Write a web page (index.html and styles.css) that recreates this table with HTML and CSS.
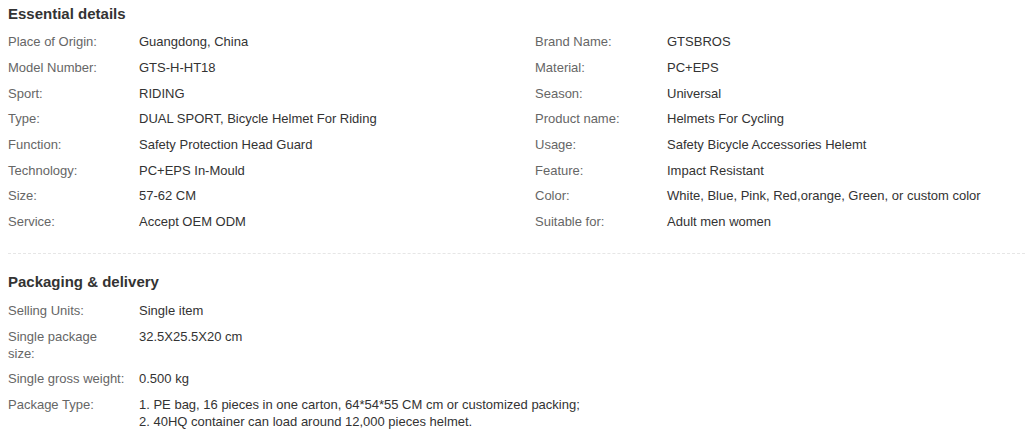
FILE: index.html
```html
<!DOCTYPE html>
<html>
<head>
<meta charset="utf-8">
<link rel="stylesheet" href="styles.css">
</head>
<body>
<div class="page">
  <section class="block essential">
    <h3 class="title">Essential details</h3>
    <div class="cols">
      <div class="col">
        <div class="row"><div class="label">Place of Origin:</div><div class="value">Guangdong, China</div></div>
        <div class="row"><div class="label">Model Number:</div><div class="value">GTS-H-HT18</div></div>
        <div class="row"><div class="label">Sport:</div><div class="value">RIDING</div></div>
        <div class="row"><div class="label">Type:</div><div class="value">DUAL SPORT, Bicycle Helmet For Riding</div></div>
        <div class="row"><div class="label">Function:</div><div class="value">Safety Protection Head Guard</div></div>
        <div class="row"><div class="label">Technology:</div><div class="value">PC+EPS In-Mould</div></div>
        <div class="row"><div class="label">Size:</div><div class="value">57-62 CM</div></div>
        <div class="row"><div class="label">Service:</div><div class="value">Accept OEM ODM</div></div>
      </div>
      <div class="col col-right">
        <div class="row"><div class="label">Brand Name:</div><div class="value">GTSBROS</div></div>
        <div class="row"><div class="label">Material:</div><div class="value">PC+EPS</div></div>
        <div class="row"><div class="label">Season:</div><div class="value">Universal</div></div>
        <div class="row"><div class="label">Product name:</div><div class="value">Helmets For Cycling</div></div>
        <div class="row"><div class="label">Usage:</div><div class="value">Safety Bicycle Accessories Helemt</div></div>
        <div class="row"><div class="label">Feature:</div><div class="value">Impact Resistant</div></div>
        <div class="row"><div class="label">Color:</div><div class="value">White, Blue, Pink, Red,orange, Green, or custom color</div></div>
        <div class="row"><div class="label">Suitable for:</div><div class="value">Adult men women</div></div>
      </div>
    </div>
  </section>
  <section class="block packaging">
    <h3 class="title">Packaging &amp; delivery</h3>
    <div class="list">
      <div class="row"><div class="label">Selling Units:</div><div class="value">Single item</div></div>
      <div class="row"><div class="label">Single package size:</div><div class="value">32.5X25.5X20 cm</div></div>
      <div class="row"><div class="label">Single gross weight:</div><div class="value">0.500 kg</div></div>
      <div class="row"><div class="label">Package Type:</div><div class="value">1. PE bag, 16 pieces in one carton, 64*54*55 CM cm or customized packing;<br>2. 40HQ container can load around 12,000 pieces helmet.</div></div>
    </div>
  </section>
</div>
</body>
</html>
```

FILE: styles.css
```css
html, body {
  margin: 0;
  padding: 0;
  background: #fff;
}
body {
  font-family: "Liberation Sans", Arial, sans-serif;
  font-size: 13px;
  color: #333;
}
.page {
  padding-left: 8px;
}
.title {
  margin: 4px 0 5px;
  font-size: 15px;
  line-height: 20px;
  font-weight: bold;
  color: #333;
}
.essential {
  padding-bottom: 18px;
  border-bottom: 1px dashed #e6e6e6;
}
.packaging {
  padding-top: 14px;
}
.packaging .list {
  padding-top: 1px;
}
.cols {
  display: flex;
}
.col {
  width: 527px;
  flex: none;
}
.row {
  display: flex;
  padding: 4.35px 0;
  line-height: 17px;
}
.label {
  width: 131px;
  flex: none;
  color: #666;
  padding-right: 13px;
  box-sizing: border-box;
}
.col-right .label {
  width: 132px;
}
.value {
  color: #333;
}
```
